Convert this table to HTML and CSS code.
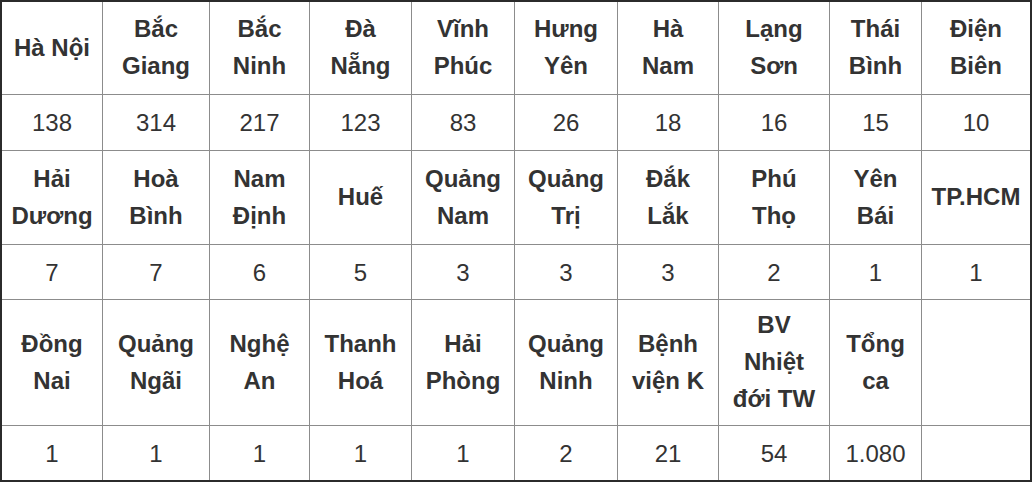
FILE: index.html
```html
<!DOCTYPE html>
<html lang="vi">
<head>
<meta charset="utf-8">
<title>Số ca theo tỉnh</title>
<link rel="stylesheet" href="styles.css">
</head>
<body>
<table class="stats">
  <colgroup>
    <col class="c1"><col class="c2"><col class="c3"><col class="c4"><col class="c5">
    <col class="c6"><col class="c7"><col class="c8"><col class="c9"><col class="c10">
  </colgroup>
  <tbody>
    <tr class="head r1">
      <td>Hà Nội</td><td>Bắc Giang</td><td>Bắc Ninh</td><td>Đà Nẵng</td><td>Vĩnh Phúc</td>
      <td>Hưng Yên</td><td>Hà Nam</td><td>Lạng Sơn</td><td>Thái Bình</td><td>Điện Biên</td>
    </tr>
    <tr class="num r2">
      <td>138</td><td>314</td><td>217</td><td>123</td><td>83</td>
      <td>26</td><td>18</td><td>16</td><td>15</td><td>10</td>
    </tr>
    <tr class="head r3">
      <td>Hải Dương</td><td>Hoà Bình</td><td>Nam Định</td><td>Huế</td><td>Quảng Nam</td>
      <td>Quảng Trị</td><td>Đắk Lắk</td><td>Phú Thọ</td><td>Yên Bái</td><td class="nowrap">TP.HCM</td>
    </tr>
    <tr class="num r4">
      <td>7</td><td>7</td><td>6</td><td>5</td><td>3</td>
      <td>3</td><td>3</td><td>2</td><td>1</td><td>1</td>
    </tr>
    <tr class="head r5">
      <td>Đồng Nai</td><td>Quảng Ngãi</td><td>Nghệ An</td><td>Thanh Hoá</td><td>Hải Phòng</td>
      <td>Quảng Ninh</td><td>Bệnh viện K</td><td>BV Nhiệt đới TW</td><td>Tổng ca</td><td></td>
    </tr>
    <tr class="num r6 last">
      <td>1</td><td>1</td><td>1</td><td>1</td><td>1</td>
      <td>2</td><td>21</td><td>54</td><td>1.080</td><td></td>
    </tr>
  </tbody>
</table>
</body>
</html>
```
FILE: styles.css
```css
html, body {
  margin: 0;
  padding: 0;
  background: #ffffff;
}

.stats {
  width: 1032px;
  table-layout: fixed;
  border-collapse: separate;
  border-spacing: 0;
  border: 2px solid #2b2b2b;
  font-family: "Liberation Sans", Arial, sans-serif;
  font-size: 24px;
  line-height: 37px;
  color: #333333;
}

.c1 { width: 101px; }
.c2 { width: 107px; }
.c3 { width: 100px; }
.c4 { width: 102px; }
.c5 { width: 103px; }
.c6 { width: 103px; }
.c7 { width: 101px; }
.c8 { width: 111px; }
.c9 { width: 92px; }
.c10 { width: 108px; }

.stats td {
  box-sizing: border-box;
  padding: 0 8px;
  text-align: center;
  vertical-align: middle;
  border-right: 1px solid #8c8c8c;
  border-bottom: 1px solid #8c8c8c;
}

.stats td:last-child {
  border-right: none;
}

.stats tr.last td {
  border-bottom: none;
}

.head td {
  font-weight: bold;
  padding-bottom: 2px;
}

.nowrap {
  white-space: nowrap;
}

.r1 { height: 93px; }
.r2 { height: 56px; }
.r3 { height: 94px; }
.r4 { height: 55px; }
.r5 { height: 126px; }
.r6 { height: 54px; }
```
